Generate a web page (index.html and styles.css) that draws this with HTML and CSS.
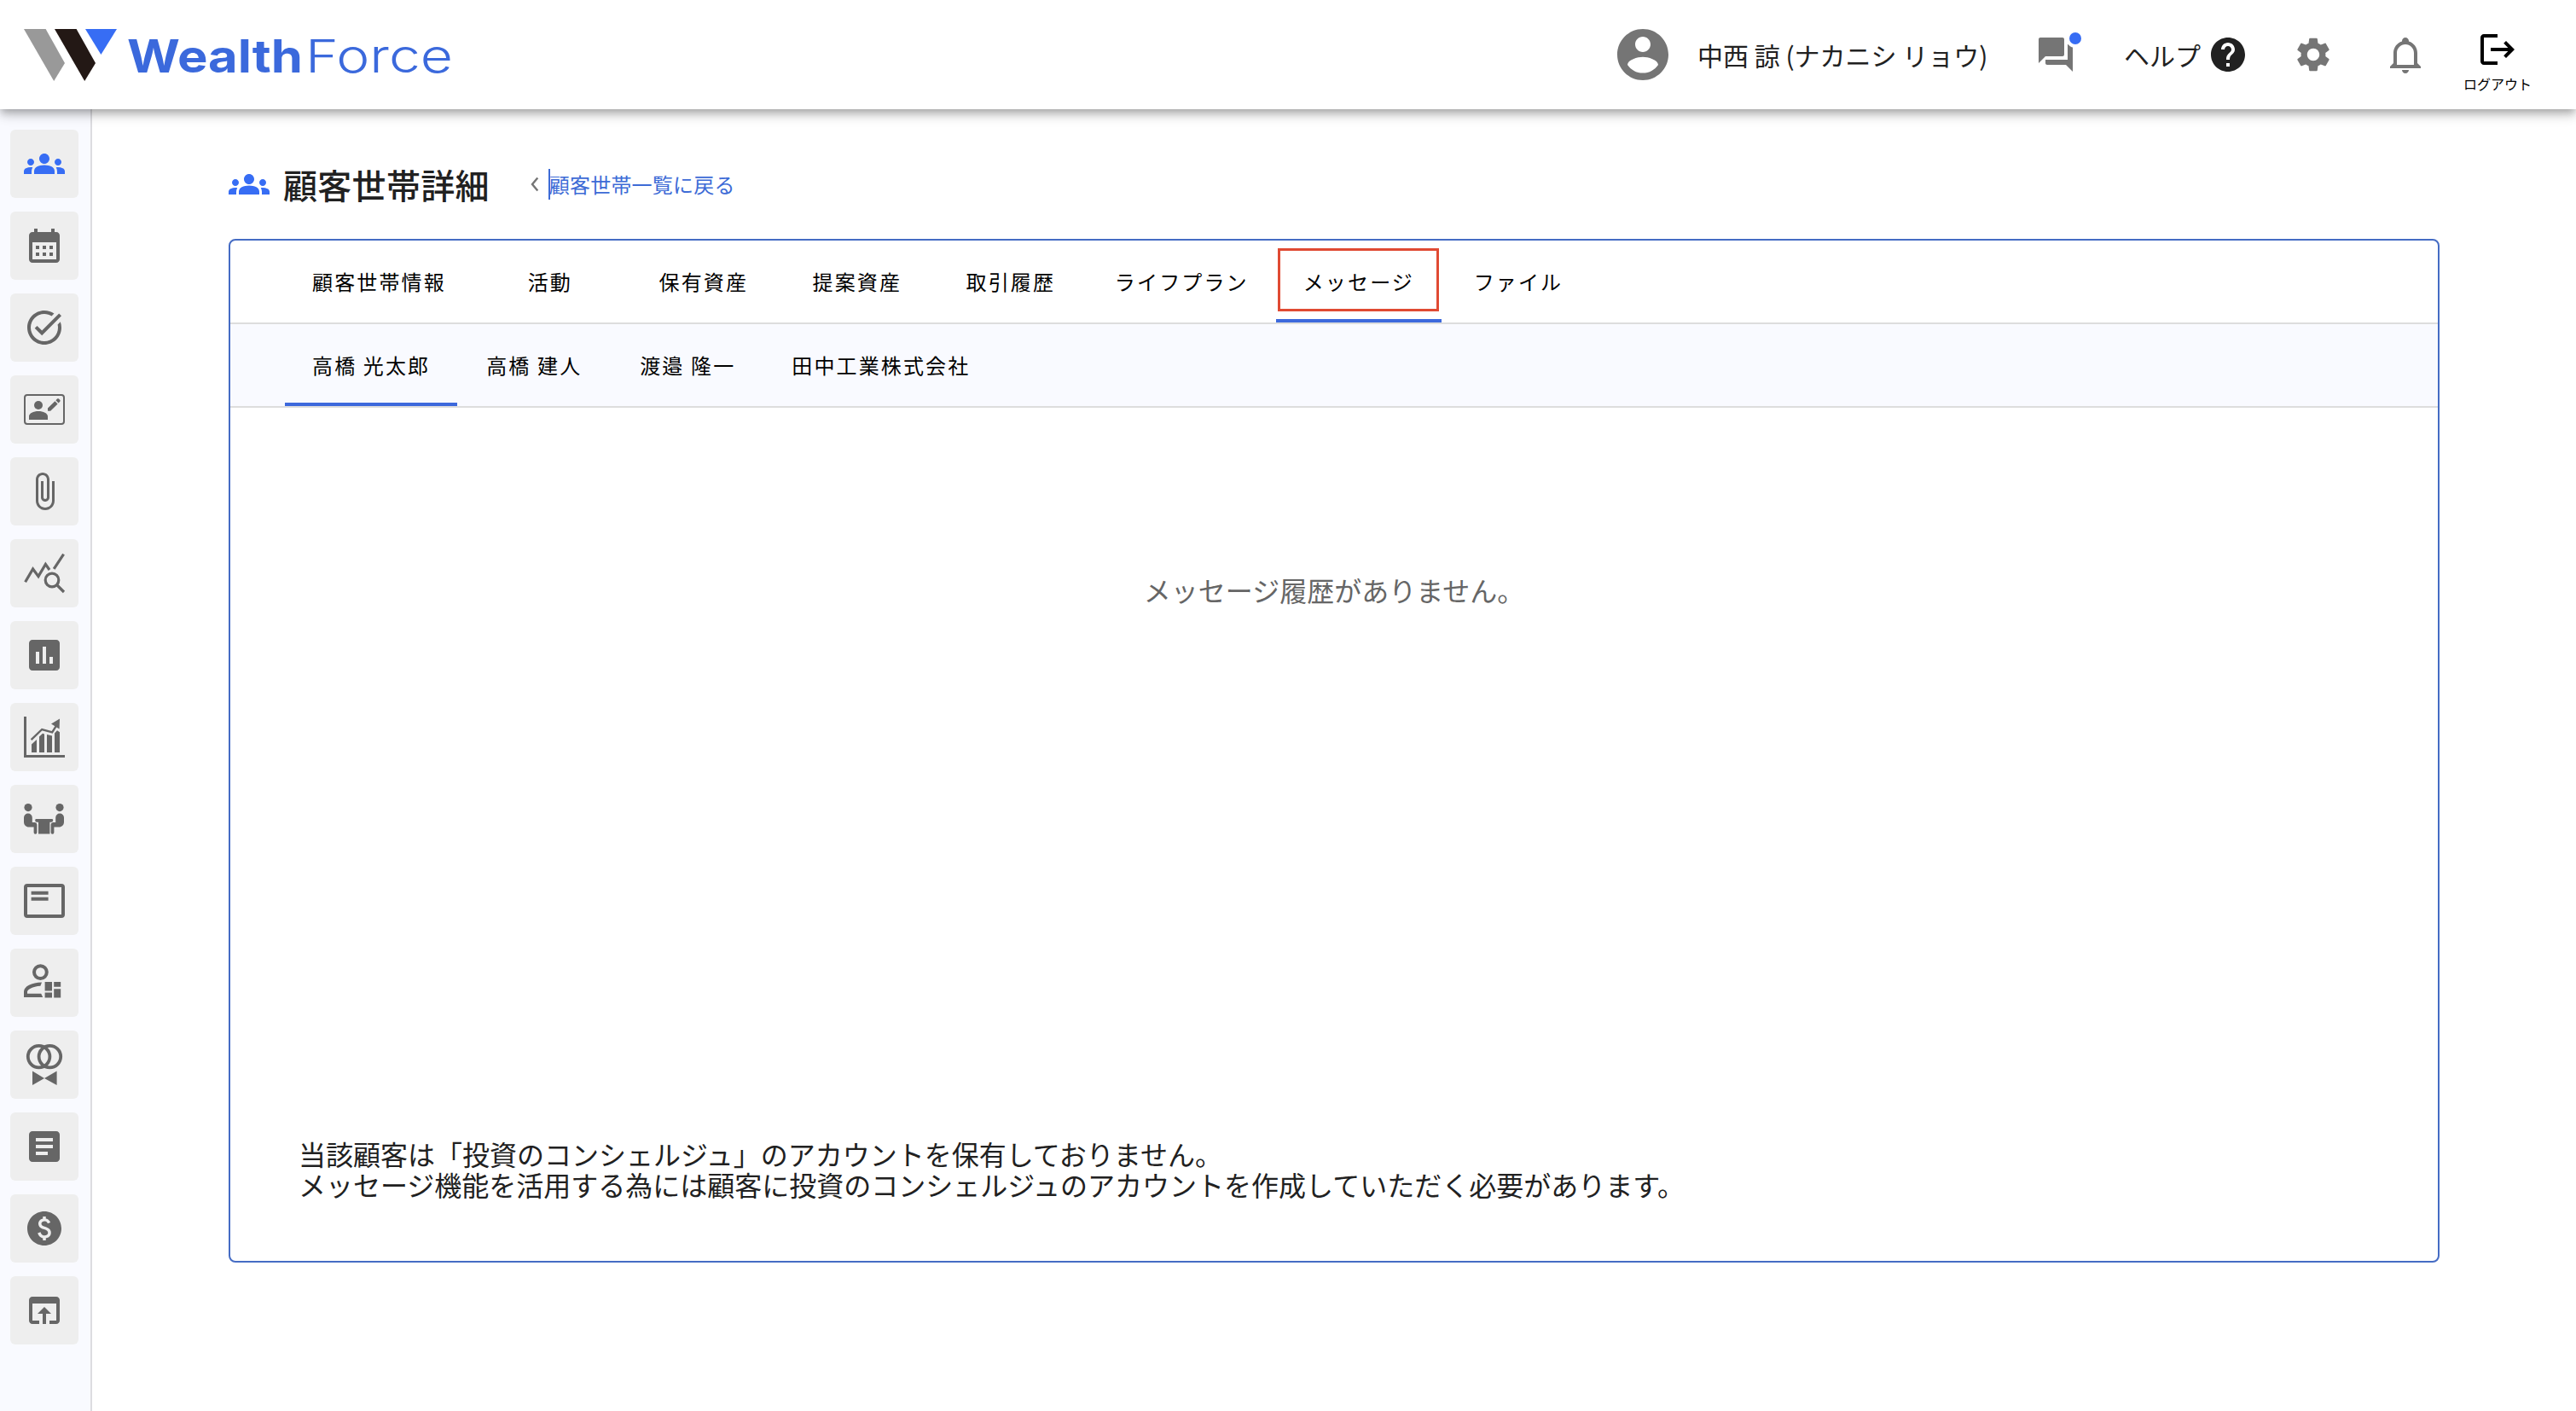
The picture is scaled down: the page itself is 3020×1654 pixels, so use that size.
FILE: index.html
```html
<!DOCTYPE html>
<html lang="ja">
<head>
<meta charset="utf-8">
<title>顧客世帯詳細 | WealthForce</title>
<link rel="stylesheet" href="styles.css">
</head>
<body>
<header class="header">
  <a class="logo" aria-label="WealthForce">
    <svg class="logo-svg" viewBox="0 0 504 64" width="504" height="64">
      <path fill="#999" d="M0 2h25.600L48 42 35.200 63z"/>
      <path fill="#231815" d="M36 2h25.600L84 42 71.200 63z"/>
      <path fill="#376df4" d="M72 2h37L90.400 32z"/>
      <text class="logo-bold" x="121" y="53" textLength="206" lengthAdjust="spacingAndGlyphs">Wealth</text>
      <text class="logo-light" x="330" y="53" textLength="173" lengthAdjust="spacingAndGlyphs">Force</text>
    </svg>
  </a>
  <div class="user">
    <svg class="avatar" viewBox="0 0 24 24"><path d="M12 2C6.480 2 2 6.480 2 12s4.480 10 10 10 10-4.480 10-10S17.520 2 12 2zm0 3c1.660 0 3 1.340 3 3s-1.340 3-3 3-3-1.340-3-3 1.340-3 3-3zm0 14.200c-2.500 0-4.710-1.280-6-3.220.03-1.990 4-3.080 6-3.080 1.990 0 5.970 1.090 6 3.080-1.290 1.940-3.500 3.220-6 3.220z"/></svg>
    <span class="user-name">中西 諒 (ナカニシ リョウ)</span>
  </div>
  <div class="chat">
    <svg class="icon" viewBox="0 0 24 24"><path d="M21 6h-2v9H6v2c0 .55.45 1 1 1h11l4 4V7c0-.55-.45-1-1-1zm-4 6V3c0-.55-.45-1-1-1H3c-.55 0-1 .45-1 1v14l4-4h10c.55 0 1-.45 1-1z"/></svg>
    <span class="badge"></span>
  </div>
  <div class="help">
    <span>ヘルプ</span>
    <svg class="icon" viewBox="0 0 24 24"><path d="M12 2C6.480 2 2 6.480 2 12s4.480 10 10 10 10-4.480 10-10S17.520 2 12 2zm1 17h-2v-2h2v2zm2.070-7.750l-.9.92C13.450 12.900 13 13.500 13 15h-2v-.5c0-1.100.45-2.100 1.170-2.830l1.240-1.260c.37-.36.59-.86.59-1.410 0-1.100-.9-2-2-2s-2 .9-2 2H8c0-2.210 1.790-4 4-4s4 1.790 4 4c0 .88-.36 1.680-.93 2.250z"/></svg>
  </div>
  <svg class="icon settings" viewBox="0 0 24 24"><path d="M19.140 12.940c.04-.3.06-.61.06-.94 0-.32-.02-.64-.07-.94l2.030-1.580c.18-.14.23-.41.12-.61l-1.920-3.320c-.12-.22-.37-.29-.59-.22l-2.390.96c-.5-.38-1.030-.7-1.620-.94l-.36-2.540c-.04-.24-.24-.41-.48-.41h-3.840c-.24 0-.43.17-.47.41l-.36 2.540c-.59.24-1.130.57-1.620.94l-2.390-.96c-.22-.08-.47 0-.59.22L2.740 8.870c-.12.21-.08.47.12.61l2.030 1.580c-.05.3-.09.63-.09.94s.02.64.07.94l-2.030 1.580c-.18.14-.23.41-.12.61l1.920 3.320c.12.22.37.29.59.22l2.390-.96c.5.38 1.030.7 1.620.94l.36 2.540c.05.24.24.41.48.41h3.840c.24 0 .44-.17.47-.41l.36-2.540c.59-.24 1.130-.56 1.620-.94l2.390.96c.22.08.47 0 .59-.22l1.920-3.320c.12-.22.07-.47-.12-.61l-2.010-1.580zM12 15.600c-1.980 0-3.600-1.620-3.600-3.600s1.620-3.600 3.600-3.600 3.600 1.620 3.600 3.600-1.620 3.600-3.600 3.600z"/></svg>
  <svg class="icon bell" viewBox="0 0 24 24"><path d="M10 21h4c0 1.100-.9 2-2 2s-2-.9-2-2m11-2v1H3v-1l2-2v-6c0-3.100 2.030-5.830 5-6.710V4c0-1.100.9-2 2-2s2 .9 2 2v.29c2.970.88 5 3.610 5 6.710v6l2 2m-4-8c0-2.760-2.240-5-5-5s-5 2.240-5 5v7h10v-7z"/></svg>
  <div class="logout">
    <svg class="icon" viewBox="0 0 24 24"><path d="M17 7l-1.410 1.410L18.170 11H8v2h10.170l-2.580 2.580L17 17l5-5zM4 5h8V3H4c-1.100 0-2 .9-2 2v14c0 1.100.9 2 2 2h8v-2H4V5z"/></svg>
    <span>ログアウト</span>
  </div>
</header>

<div class="body">
  <nav class="sidebar">
    <a class="nav-item active"><svg class="icon" viewBox="0 0 24 24"><path id="groups" d="M12 12.750c1.630 0 3.070.39 4.240.9 1.080.48 1.760 1.560 1.760 2.730V18H6v-1.610c0-1.180.68-2.260 1.760-2.730 1.170-.52 2.610-.91 4.240-.91zM4 13c1.100 0 2-.9 2-2s-.9-2-2-2-2 .9-2 2 .9 2 2 2zm1.130 1.100c-.37-.06-.74-.1-1.130-.1-.99 0-1.930.21-2.780.58C.48 14.900 0 15.620 0 16.430V18h4.500v-1.610c0-.83.23-1.610.63-2.290zM20 13c1.100 0 2-.9 2-2s-.9-2-2-2-2 .9-2 2 .9 2 2 2zm4 3.430c0-.81-.48-1.530-1.220-1.850-.85-.37-1.790-.58-2.780-.58-.39 0-.76.04-1.130.1.4.68.63 1.460.63 2.290V18H24v-1.570zM12 6c1.660 0 3 1.340 3 3s-1.340 3-3 3-3-1.340-3-3 1.340-3 3-3z"/></svg></a>
    <a class="nav-item"><svg class="icon" viewBox="0 0 24 24"><path d="M19 4h-1V2h-2v2H8V2H6v2H5c-1.110 0-1.990.9-1.990 2L3 20c0 1.100.89 2 2 2h14c1.100 0 2-.9 2-2V6c0-1.100-.9-2-2-2zm0 16H5V10h14v10zM9 14H7v-2h2v2zm4 0h-2v-2h2v2zm4 0h-2v-2h2v2zm-8 4H7v-2h2v2zm4 0h-2v-2h2v2zm4 0h-2v-2h2v2z"/></svg></a>
    <a class="nav-item"><svg class="icon" viewBox="0 0 24 24"><path d="M22 5.180L10.590 16.600l-4.240-4.240 1.410-1.410 2.830 2.830 10-10L22 5.180zm-2.210 5.040c.13.57.21 1.170.21 1.780 0 4.420-3.580 8-8 8s-8-3.580-8-8 3.580-8 8-8c1.580 0 3.040.46 4.280 1.250l1.440-1.440C16.100 2.670 14.130 2 12 2 6.480 2 2 6.480 2 12s4.480 10 10 10 10-4.480 10-10c0-1.190-.22-2.330-.6-3.390l-1.610 1.610z"/></svg></a>
    <a class="nav-item"><svg class="icon" viewBox="0 0 24 24">
      <rect class="line" x=".5" y="3.500" width="23" height="17" rx="1.500" stroke-width="1"/>
      <circle cx="8.500" cy="9.500" r="2.500"/>
      <path d="M3 18v-2c0-1.700 2.600-3 5.500-3s5.500 1.300 5.500 3v2zM14 11.300l4.200-4.200 1.600 1.600-4.200 4.200H14zM18.700 6.600l.8-.8c.3-.3.700-.3 1 0l.6.6c.3.300.3.700 0 1l-.8.800z"/>
    </svg></a>
    <a class="nav-item"><svg class="icon" viewBox="0 0 24 24"><path d="M16.500 6v11.500c0 2.210-1.790 4-4 4s-4-1.790-4-4V5c0-1.380 1.120-2.500 2.500-2.500s2.500 1.120 2.500 2.500v10.500c0 .55-.45 1-1 1s-1-.45-1-1V6H10v9.500c0 1.380 1.120 2.500 2.500 2.500s2.500-1.120 2.500-2.500V5c0-2.210-1.790-4-4-4S7 2.790 7 5v12.500c0 3.040 2.460 5.500 5.500 5.500s5.500-2.460 5.500-5.500V6h-1.500z"/></svg></a>
    <a class="nav-item"><svg class="icon" viewBox="0 0 24 24"><g class="line" stroke-width="1.600">
      <path d="M.8 17.100L5.300 9.500l3.200 4.300 4.200-7.100L15 10M17.600 9.400L23.300.8M19.500 19l4 4"/>
      <circle cx="16.500" cy="16" r="3.900"/>
    </g></svg></a>
    <a class="nav-item"><svg class="icon" viewBox="0 0 24 24"><path d="M19 3H5c-1.100 0-2 .9-2 2v14c0 1.100.9 2 2 2h14c1.100 0 2-.9 2-2V5c0-1.100-.9-2-2-2zM9 17H7v-7h2v7zm4 0h-2V7h2v10zm4 0h-2v-4h2v4z"/></svg></a>
    <a class="nav-item"><svg class="icon" viewBox="0 0 24 24">
      <path d="M0 0h1.500v22.500H24V24H0zM4.500 16.200l3-2.700V21h-3zM9 11.700l2-1.800 1 .3V21H9zM13.500 10.500l3 .7V21h-3zM18 9.800l1.500-1.700 1.500 1V21h-3zM21 1.300l-5 3 1.600.9 1.500 1.100 1.700.9z"/>
      <path class="line" stroke-width="1.200" d="M4.300 13.600l6.300-6.100 6 1.700 2.500-4"/>
    </svg></a>
    <a class="nav-item"><svg class="icon" viewBox="0 0 24 24">
      <circle cx="2.500" cy="5.300" r="2.300"/><circle cx="21" cy="5.300" r="2.300"/>
      <path d="M0 11.200a2.450 2.450 0 0 1 4.900 0V14h1.300c.9 0 1.500.6 1.500 1.500v4.400a.95.95 0 0 1-1.900 0v-3.200H3c-1.800 0-3-1.200-3-3zM23.500 11.200a2.450 2.450 0 0 0-4.900 0V14h-1.300c-.9 0-1.500.6-1.500 1.500v4.400a.95.95 0 0 0 1.900 0v-3.200h2.800c1.800 0 3-1.200 3-3z"/>
      <path d="M7.300 12h9c.6 0 .8.3.8.8s-.3 1.100-1.100 1.100h-.8v6.900H8.500v-6.900h-.9c-.7 0-1-.6-1-1.100s.2-.8.700-.8z"/>
    </svg></a>
    <a class="nav-item"><svg class="icon" viewBox="0 0 24 24">
      <rect class="line" x="1" y="3" width="22" height="18" rx="1" stroke-width="2"/>
      <path d="M4.300 6.400h10v2h-10zM4.300 9.900h10v2h-10z"/>
    </svg></a>
    <a class="nav-item"><svg class="icon" viewBox="0 0 24 24">
      <circle class="line" cx="9.700" cy="5.800" r="3.700" stroke-width="2"/>
      <path d="M10.500 11.800C4.500 12 0 14.200 0 17.200v3.300h11.100l-1-2.100H2v-1.100c0-1.100 3-3.200 7.700-3.400zM12.300 11.500h4.200v5.200h-4.200zM12.300 17.700h4.200v3h-4.200zM17.600 11.500h4v2.900h-4zM17.600 15.600h4v5.100h-4z"/>
    </svg></a>
    <a class="nav-item"><svg class="icon" viewBox="0 0 24 24">
      <circle class="line" cx="8.800" cy="7.300" r="6.400" stroke-width="1.900"/>
      <circle class="line" cx="15.200" cy="7.300" r="6.400" stroke-width="1.900"/>
      <path d="M5 15.800l7 4.200 7.300-4.200V24L12 20 5 24z"/>
    </svg></a>
    <a class="nav-item"><svg class="icon" viewBox="0 0 24 24"><path d="M19 3H5c-1.100 0-2 .9-2 2v14c0 1.100.9 2 2 2h14c1.100 0 2-.9 2-2V5c0-1.100-.9-2-2-2zm-5 14H7v-2h7v2zm3-4H7v-2h10v2zm0-4H7V7h10v2z"/></svg></a>
    <a class="nav-item"><svg class="icon" viewBox="0 0 24 24"><path d="M12 2C6.480 2 2 6.480 2 12s4.480 10 10 10 10-4.480 10-10S17.520 2 12 2zm.88 15.760V19h-1.750v-1.290c-.74-.18-2.390-.77-3.020-2.960l1.650-.67c.06.22.58 2.090 2.400 2.090.93 0 1.980-.48 1.980-1.610 0-.96-.7-1.460-2.280-2.030-1.100-.39-3.350-1.030-3.350-3.310 0-.1.01-2.400 2.620-2.960V5h1.750v1.240c1.840.32 2.510 1.790 2.660 2.230l-1.580.67c-.11-.35-.59-1.340-1.900-1.340-.7 0-1.810.37-1.810 1.390 0 .95.86 1.310 2.640 1.900 2.400.83 3.010 2.050 3.010 3.450 0 2.630-2.500 3.130-3.020 3.220z"/></svg></a>
    <a class="nav-item"><svg class="icon" viewBox="0 0 24 24"><path d="M19 4H5c-1.110 0-2 .9-2 2v12c0 1.100.89 2 2 2h4v-2H5V8h14v10h-4v2h4c1.100 0 2-.9 2-2V6c0-1.100-.89-2-2-2zm-7 6l-4 4h3v6h2v-6h3l-4-4z"/></svg></a>
  </nav>

  <main class="main">
    <div class="page-head">
      <svg class="icon page-icon" viewBox="0 0 24 24"><use href="#groups"/></svg>
      <h1 class="page-title">顧客世帯詳細</h1>
      <svg class="chevron" viewBox="0 0 10 18" width="10" height="18"><path d="M8.300 1.500L2 9l6.300 7.500"/></svg>
      <a class="back-link">顧客世帯一覧に戻る</a>
    </div>
    <section class="panel">
      <div class="tabs">
        <a class="tab">顧客世帯情報</a>
        <a class="tab">活動</a>
        <a class="tab">保有資産</a>
        <a class="tab">提案資産</a>
        <a class="tab">取引履歴</a>
        <a class="tab">ライフプラン</a>
        <a class="tab selected highlighted">メッセージ</a>
        <a class="tab">ファイル</a>
      </div>
      <div class="tabs members">
        <a class="tab selected">高橋 光太郎</a>
        <a class="tab">高橋 建人</a>
        <a class="tab">渡邉 隆一</a>
        <a class="tab">田中工業株式会社</a>
      </div>
      <p class="empty">メッセージ履歴がありません。</p>
      <p class="notice">当該顧客は「投資のコンシェルジュ」のアカウントを保有しておりません。<br>メッセージ機能を活用する為には顧客に投資のコンシェルジュのアカウントを作成していただく必要があります。</p>
    </section>
  </main>
</div>
</body>
</html>
```
FILE: styles.css
```css
*, *::after { box-sizing: border-box; }
html, body { margin: 0; height: 100%; }
body {
  display: flex;
  flex-direction: column;
  height: 1654px;
  overflow: hidden;
  background: #fff;
  color: #212121;
  font-family: "Noto Sans CJK JP", "Noto Sans", sans-serif;
}
h1, p { margin: 0; }
svg { display: block; flex: none; overflow: visible; }
.icon { width: 48px; height: 48px; fill: currentColor; }
.line { fill: none; stroke: currentColor; }

.header {
  position: relative;
  z-index: 2;
  flex: none;
  display: flex;
  align-items: center;
  height: 128px;
  padding: 0 52px 0 28px;
  background: #fff;
  box-shadow: 0 4px 8px -2px rgba(0,0,0,.2), 0 8px 10px rgba(0,0,0,.14), 0 2px 20px rgba(0,0,0,.12);
  color: #757575;
  font-size: 30px;
  line-height: 44px;
  white-space: nowrap;
}
.logo { margin-right: auto; }
.logo-bold, .logo-light { fill: #3b69dc; font-family: Inter, sans-serif; font-size: 54px; }
.logo-bold { font-weight: 700; }
.logo-light { font-weight: 300; }
.user { display: flex; align-items: center; gap: 28px; }
.avatar { width: 72px; height: 72px; fill: currentColor; }
.user-name { width: 396px; color: #212121; }
.chat { position: relative; }
.badge {
  position: absolute;
  left: 40px;
  top: -2px;
  width: 14px;
  height: 14px;
  border-radius: 50%;
  background: #376df4;
  box-shadow: 0 0 0 4px #fff;
}
.help { display: flex; align-items: center; gap: 8px; margin-left: 56px; color: #212121; }
.settings { margin-left: 52px; }
.bell { margin-left: 60px; }
.logout {
  display: flex;
  flex-direction: column;
  align-items: center;
  margin-left: 44px;
  padding-top: 16px;
  color: #000;
  font-size: 16px;
  line-height: 24px;
}
.logout .icon { margin-bottom: 4px; }

.body { flex: 1; display: flex; min-height: 0; }
.sidebar {
  flex: none;
  display: flex;
  flex-direction: column;
  gap: 16px;
  width: 108px;
  padding: 24px 12px;
  border-right: 2px solid #dcdce0;
  background: #f9faff;
}
.nav-item {
  display: flex;
  align-items: center;
  justify-content: center;
  width: 80px;
  height: 80px;
  border-radius: 6px;
  background: #eee;
  color: #666;
}
.nav-item.active { color: #376df4; }

.main { flex: 1; padding: 52px 160px 0; }
.page-head { display: flex; align-items: center; height: 72px; }
.page-icon { color: #376df4; }
.page-title {
  margin: 0 48px 0 16px;
  padding-bottom: 1px;
  font-size: 40px;
  font-weight: 500;
  line-height: 60px;
  letter-spacing: .3px;
}
.chevron { fill: none; stroke: #757575; stroke-width: 2.4; margin-right: 11px; }
.back-link {
  border-left: 2px solid #3d6bd6;
  color: #3d6bd6;
  font-size: 24px;
  line-height: 36px;
  letter-spacing: .2px;
  text-indent: -1px;
}
.panel {
  display: flex;
  flex-direction: column;
  width: 2592px;
  height: 1200px;
  margin-top: 28px;
  border: 2px solid #456cc4;
  border-radius: 8px;
}
.tabs {
  display: flex;
  height: 98px;
  padding-left: 64px;
  border-bottom: 2px solid #ddd;
}
.members { background: #f9faff; }
.tab {
  position: relative;
  display: flex;
  align-items: center;
  justify-content: center;
  min-width: 180px;
  padding: 0 32px 2px;
  border-top: 4px solid transparent;
  border-bottom: 4px solid transparent;
  color: #000;
  font-size: 24px;
  letter-spacing: .0892857em;
  white-space: nowrap;
}
.tab.selected { border-bottom-color: #3d69dc; }
.highlighted::after {
  content: "";
  position: absolute;
  left: 2px;
  top: 5px;
  width: 189px;
  height: 74px;
  border: 3px solid #e04a33;
}
.empty {
  margin-top: 189px;
  color: #666;
  font-size: 32px;
  line-height: 48px;
  text-align: center;
}
.notice {
  margin: auto 0 72px 80px;
  font-size: 32px;
  line-height: 36px;
}
```
